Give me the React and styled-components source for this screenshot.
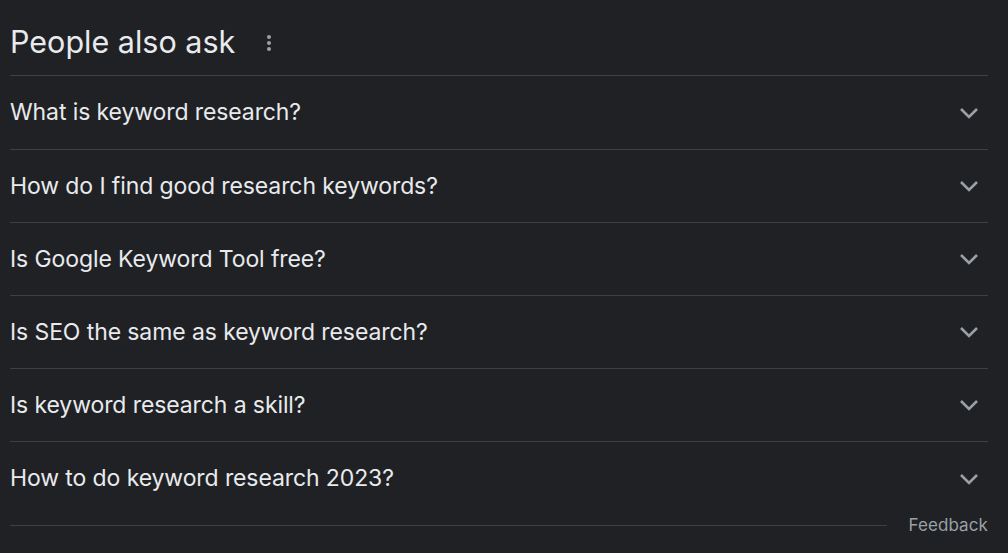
import React from 'react'
import styled, { createGlobalStyle } from 'styled-components'

const GlobalStyle = createGlobalStyle`
  html, body {
    margin: 0;
    background: #202124;
  }
  body {
    font-family: Inter, "Open Sans", Arial, sans-serif;
  }
`

const Panel = styled.div`
  width: 1008px;
  height: 553px;
  background: #202124;
  padding: 0 20px 0 10px;
  box-sizing: border-box;
  overflow: hidden;
`

const Header = styled.div`
  display: flex;
  align-items: center;
  height: 76px;
  border-bottom: 1px solid #3c4043;
  box-sizing: border-box;
`

const Title = styled.h2`
  margin: 0;
  font-size: 30.5px;
  font-weight: 400;
  color: #e8eaed;
  padding-top: 8px;
`

const MoreButton = styled.span`
  display: flex;
  flex-direction: column;
  gap: 2px;
  margin-left: 32px;
  padding-top: 10px;

  i {
    width: 4px;
    height: 4px;
    border-radius: 50%;
    background: #9aa0a6;
  }
`

const List = styled.div`
  display: flex;
  flex-direction: column;
`

const Row = styled.div`
  display: flex;
  align-items: center;
  justify-content: space-between;
  height: 73px;
  border-bottom: ${({ $last }) => ($last ? 'none' : '1px solid #3c4043')};
  box-sizing: border-box;
  cursor: pointer;

  &:first-child {
    height: 74px;
  }
`

const Question = styled.span`
  font-size: 23px;
  color: #e8eaed;
  letter-spacing: -0.1px;
  margin-top: -1px;
`

const Chevron = styled.svg`
  width: 20px;
  height: 12px;
  margin-right: 9px;
  flex-shrink: 0;
`

const Footer = styled.div`
  display: flex;
  align-items: center;
  gap: 21px;
  height: 24px;
  margin-top: -2px;
`

const Line = styled.div`
  flex: 1;
  height: 1px;
  background: #3c4043;
`

const Feedback = styled.span`
  font-size: 17px;
  letter-spacing: 0.1px;
  color: #9aa0a6;
`

const questions = [
  'What is keyword research?',
  'How do I find good research keywords?',
  'Is Google Keyword Tool free?',
  'Is SEO the same as keyword research?',
  'Is keyword research a skill?',
  'How to do keyword research 2023?',
]

export default function App() {
  return (
    <>
      <GlobalStyle />
      <Panel>
        <Header>
          <Title>People also ask</Title>
          <MoreButton><i /><i /><i /></MoreButton>
        </Header>
        <List>
          {questions.map((q, i) => (
            <Row key={q} $last={i === questions.length - 1}>
              <Question>{q}</Question>
              <Chevron viewBox="0 0 20 12">
                <path d="M2 2l8 8 8-8" fill="none" stroke="#9aa0a6" strokeWidth="2.6" />
              </Chevron>
            </Row>
          ))}
        </List>
        <Footer>
          <Line />
          <Feedback>Feedback</Feedback>
        </Footer>
      </Panel>
    </>
  )
}
